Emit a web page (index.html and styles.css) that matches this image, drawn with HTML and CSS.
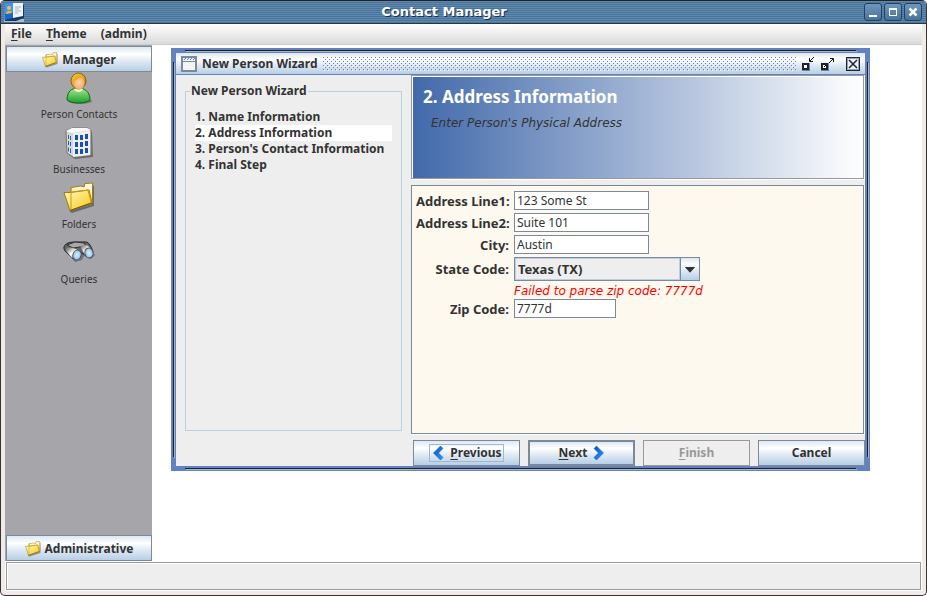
FILE: index.html
```html
<!DOCTYPE html>
<html lang="en">
<head>
<meta charset="utf-8">
<title>Contact Manager</title>
<link rel="stylesheet" href="styles.css">
</head>
<body>
<svg class="defs" width="0" height="0" aria-hidden="true">
  <defs>
    <linearGradient id="gold" x1="0" y1="0" x2="1" y2="1"><stop offset="0" stop-color="#fff9c4"/><stop offset="1" stop-color="#f8ca10"/></linearGradient>
    <linearGradient id="pale" x1="0" y1="0" x2="0" y2="1"><stop offset="0" stop-color="#fffde8"/><stop offset="1" stop-color="#f7d95c"/></linearGradient>
    <linearGradient id="green" x1="0" y1="0" x2="0" y2="1"><stop offset="0" stop-color="#a5eb8f"/><stop offset="1" stop-color="#1b9f2a"/></linearGradient>
    <radialGradient id="skin"><stop offset="0" stop-color="#ffdcb8"/><stop offset="1" stop-color="#f6a765"/></radialGradient>
    <linearGradient id="hair" x1="0" y1="0" x2="1" y2="1"><stop offset="0" stop-color="#ffd34a"/><stop offset="1" stop-color="#a97000"/></linearGradient>
    <radialGradient id="lens"><stop offset="0" stop-color="#d9efff"/><stop offset="1" stop-color="#8ec2f5"/></radialGradient>
    <linearGradient id="tube" x1="0" y1="0" x2="1" y2="1"><stop offset="0" stop-color="#555"/><stop offset=".5" stop-color="#fff"/><stop offset="1" stop-color="#777"/></linearGradient>
    <linearGradient id="arrow" x1="0" y1="0" x2="1" y2="1"><stop offset="0" stop-color="#0a4fc4"/><stop offset="1" stop-color="#2f9cff"/></linearGradient>
    <symbol id="folder" viewBox="0 0 32 32">
      <path d="M6 29 9 31 31 24V4L29 3V22Z" fill="#000" opacity=".35"/>
      <path d="M8 5.500 18 4 21 5 22 1.500 29.500 1V21L7 28Z" fill="url(#pale)" stroke="#a77b06"/>
      <path d="M1 10.500H7L26 8 29 20.500 7 28.500Z" fill="url(#gold)" stroke="#a77b06"/>
      <path d="M8 5V27M9 10 25 8 28 20" fill="none" stroke="#c99a10"/>
      <path d="M7 28.500 29 21" stroke="#7e5a00"/>
    </symbol>
  </defs>
</svg>

<div class="window">
  <header class="titlebar">
    <svg class="app-icon" width="20" height="20" viewBox="0 0 20 20" aria-hidden="true">
      <path d="M14 17H20V20H0V18Z" fill="#b5bcc2"/>
      <path d="M1 3H20V16L12 19H1Z" fill="#17395f"/>
      <path d="M1 2 9 1V15L0 17Z" fill="#3f96ee"/>
      <path d="M9 1H19V14L9 16Z" fill="#eef3f8"/>
      <path d="M1 12 9 10V16L1 18Z" fill="#1767cf"/>
      <circle cx="5" cy="6" r="2" fill="#f2bd62"/><path d="M2 12C2 8 8 8 8 11Z" fill="#f4ba20"/>
      <path d="M11 5H17M11 7H15M11 9H17M11 11H14" stroke="#a9b7c5"/>
    </svg>
    <h1>Contact Manager</h1>
    <div class="window-controls">
      <button type="button" aria-label="Minimize"><svg width="16" height="16" viewBox="0 0 16 16"><path d="M4 12H12" stroke="#fff" stroke-width="2"/></svg></button>
      <button type="button" aria-label="Maximize"><svg width="16" height="16" viewBox="0 0 16 16"><path d="M4.500 4V12M11.500 4V12M4 11.500H12" stroke="#fff" fill="none"/><path d="M4 5H12" stroke="#fff" stroke-width="2"/></svg></button>
      <button type="button" aria-label="Close"><svg width="16" height="16" viewBox="0 0 16 16"><path d="M4.500 4.500 11.500 11.500M11.500 4.500 4.500 11.500" stroke="#fff" stroke-width="2.500"/></svg></button>
    </div>
  </header>

  <div class="client">
    <nav class="menubar">
      <button type="button"><u>F</u>ile</button>
      <button type="button"><u>T</u>heme</button>
      <button type="button">(admin)</button>
    </nav>

    <div class="workspace">
      <aside class="outlook">
        <button type="button" class="section metal"><svg width="16" height="16"><use href="#folder"/></svg>Manager</button>
        <div class="shortcuts">
          <button type="button">
            <svg width="32" height="34" viewBox="0 0 32 34" aria-hidden="true">
              <ellipse cx="17" cy="29" rx="12" ry="3" fill="#000" opacity=".3"/>
              <path d="M4 28C4 19 9 16 15 16S27 19 27 28C22 32 9 32 4 28Z" fill="url(#green)" stroke="#0c6a1c"/>
              <path d="M11 17C13 21 18 21 20 17L17 15H13Z" fill="#e8f8e0"/>
              <ellipse cx="15.500" cy="9" rx="7.500" ry="8" fill="url(#hair)" stroke="#946200"/>
              <ellipse cx="16" cy="11" rx="5.500" ry="6.500" fill="url(#skin)"/>
              <path d="M9 8C12 7 14 3 16 4 19 3 21 5 22 8 20 6 18 6 16 6 14 8 12 8 9 10Z" fill="#ecae14"/>
            </svg>
            Person Contacts
          </button>
          <button type="button">
            <svg width="32" height="34" viewBox="0 0 32 34" aria-hidden="true">
              <path d="M6 28 12 32 30 30 29 5 26 4V28Z" fill="#000" opacity=".35"/>
              <path d="M3 4 9 1H24L28 3V28L10 30 4 26Z" fill="#d7d7d7" stroke="#777"/>
              <path d="M3 4 9 1H24L28 3 9 6Z" fill="#fafafa"/>
              <path d="M10 6 27 4V28L10 30Z" fill="#efefef"/>
              <path d="M5 8 6 8V12L5 12ZM7 9 8 9V13L7 13ZM5 14 6 14V18L5 18ZM7 15 8 15V19L7 19ZM5 20 6 21V25L5 24ZM7 21 8 22V26L7 26Z" fill="#2f5fae"/>
              <path d="M12 8H15V13H12ZM17 8H20V13H17ZM22 7H25V12H22ZM12 15H15V20H12ZM17 15H20V20H17ZM22 14H25V19H22ZM12 22H15V27H12ZM17 22H20V27H17ZM22 21H25V26H22Z" fill="#164fae"/>
            </svg>
            Businesses
          </button>
          <button type="button">
            <svg width="32" height="34" viewBox="0 0 32 34" aria-hidden="true"><use href="#folder" width="32" height="32"/></svg>
            Folders
          </button>
          <button type="button">
            <svg width="32" height="34" viewBox="0 0 32 34" aria-hidden="true">
              <path d="M3 14 12 25 19 23 21 19 28 22 32 18 26 10Z" fill="#000" opacity=".3"/>
              <path d="M1 10C2 6 7 5 12 5L23 5C26 5 29 11 30 15L24 19 15 14 14 21 9 21C6 17 0 14 1 10Z" fill="#666" stroke="#222"/>
              <path d="M4 8 12 5 21 6 23 9 10 11Z" fill="#a8a8a8" stroke="#333"/>
              <path d="M3 10 10 11 17 14 9 21C6 17 2 14 3 10Z" fill="url(#tube)"/>
              <path d="M17 9 24 8 30 14 22 18Z" fill="url(#tube)"/>
              <ellipse cx="14" cy="18" rx="4" ry="5" transform="rotate(20 14 18)" fill="url(#lens)" stroke="#555"/>
              <ellipse cx="26" cy="16" rx="4" ry="5" transform="rotate(-15 26 16)" fill="url(#lens)" stroke="#555"/>
            </svg>
            Queries
          </button>
        </div>
        <button type="button" class="section metal"><svg width="16" height="16"><use href="#folder"/></svg>Administrative</button>
      </aside>

      <main class="desktop">
        <section class="frame" aria-label="New Person Wizard">
          <div class="frame-title metal">
            <svg width="16" height="16" viewBox="0 0 16 16" aria-hidden="true">
              <rect x="1" y="1" width="14" height="14" fill="#f4f4f4" stroke="#7a8a99" stroke-width="2"/>
              <path d="M2 2.500H14" stroke="#dce7f4"/><path d="M3 3.500H14M4 2.500H14" stroke="#6382bf" stroke-dasharray="1 2"/><path d="M2 5.500H14" stroke="#7a8a99"/>
            </svg>
            <h2>New Person Wizard</h2>
            <span class="bumps"></span>
            <button type="button" aria-label="Iconify"><svg width="14" height="16" viewBox="0 0 14 16"><rect x="2" y="8" width="5" height="5" fill="#fff" stroke="#222" stroke-width="2"/><path d="M1 14.500H8.500M8.500 7V15" stroke="#6382bf"/><path d="M13 1 9 5M8.500 2V5.500H12" fill="none" stroke="#111"/></svg></button>
            <button type="button" aria-label="Maximize"><svg width="14" height="16" viewBox="0 0 14 16"><rect x="1" y="8" width="5" height="5" fill="#fff" stroke="#222" stroke-width="2"/><path d="M0 14.500H7.500M7.500 7V15" stroke="#6382bf"/><path d="M3 11 5 9M8 7 12 3M9 2.500H12.500V6" fill="none" stroke="#111"/></svg></button>
            <button type="button" aria-label="Close"><svg width="16" height="16" viewBox="0 0 16 16"><rect x="1.500" y="1.500" width="13" height="13" fill="#e8f0f8" stroke="#222"/><rect x="2.500" y="2.500" width="11" height="11" fill="none" stroke="#8fa5d0"/><path d="M4 4 12 12M12 4 4 12" stroke="#222" stroke-width="1.500"/></svg></button>
          </div>
          <div class="wizard">
            <fieldset class="steps">
              <legend>New Person Wizard</legend>
              <ol>
                <li>1. Name Information</li>
                <li class="current" aria-current="step">2. Address Information</li>
                <li>3. Person's Contact Information</li>
                <li>4. Final Step</li>
              </ol>
            </fieldset>
            <div class="page">
              <div class="banner">
                <h3>2. Address Information</h3>
                <p>Enter Person's Physical Address</p>
              </div>
              <form class="fields" id="address">
                <label for="line1">Address Line1:</label>
                <input id="line1" type="text" value="123 Some St">
                <label for="line2">Address Line2:</label>
                <input id="line2" type="text" value="Suite 101">
                <label for="city">City:</label>
                <input id="city" type="text" value="Austin">
                <label for="state">State Code:</label>
                <div class="combo metal">
                  <select id="state"><option>Texas (TX)</option></select>
                  <svg width="19" height="22" viewBox="0 0 19 22" aria-hidden="true"><path d="M4 9H15L9.500 15Z" fill="#333"/></svg>
                </div>
                <p class="error" id="zip-error">Failed to parse zip code: 7777d</p>
                <label for="zip">Zip Code:</label>
                <input id="zip" class="short" type="text" value="7777d" aria-describedby="zip-error">
              </form>
              <div class="actions">
                <button type="button" class="metal"><span class="focus"><svg width="11" height="14" viewBox="0 0 11 14" aria-hidden="true"><path d="M7.500 0 10 2.500 5.500 7 10 11.500 7.500 14 0.500 7Z" fill="url(#arrow)" stroke="#0b48b8" stroke-width=".5"/></svg><span><u>P</u>revious</span></span></button>
                <button type="button" class="metal default"><span><u>N</u>ext</span><svg width="11" height="14" viewBox="0 0 11 14" aria-hidden="true"><path d="M3.500 0 1 2.500 5.500 7 1 11.500 3.500 14 10.500 7Z" fill="url(#arrow)" stroke="#0b48b8" stroke-width=".5"/></svg></button>
                <button type="button" disabled><span><u>F</u>inish</span></button>
                <button type="button" class="metal">Cancel</button>
              </div>
            </div>
          </div>
        </section>
      </main>
    </div>
    <footer class="status"></footer>
  </div>
</div>
</body>
</html>
```
FILE: styles.css
```css
* { box-sizing: border-box; }

:root {
  --blue: #6382bf;
  --edge: #7a8a99;
  --sky: #b8cfe5;
  --panel: #eee;
  --ink: #333;
  --plain: "DejaVu Sans", "Noto Sans", sans-serif;
}

body {
  margin: 0;
  background: #fff;
  color: var(--ink);
  font: bold 12px/16px "Noto Sans", "Open Sans", sans-serif;
}

h1, h2, h3, p, ol { margin: 0; padding: 0; font-size: inherit; }
button { margin: 0; padding: 0; border: 0; background: none; color: inherit; font: inherit; }
svg { display: block; flex: none; }
.defs { position: absolute; }
u { text-underline-offset: 2px; }

.metal { background: linear-gradient(#dde8f3, #fff 30%, #dde8f3 60%, var(--sky)); }

.window {
  display: flex;
  flex-direction: column;
  min-height: 100vh;
  border: 1px solid #3a3234;
  border-top: 0;
  border-radius: 5px;
  background: #efebe7;
  overflow: hidden;
}

.titlebar {
  display: flex;
  align-items: center;
  height: 24px;
  padding: 0 4px 0 3px;
  border-top: 1px solid #222;
  border-bottom: 1px solid #24384c;
  background: repeating-linear-gradient(#5d88b0 0 1px, #4c7398 1px 2px);
}
.titlebar h1 {
  flex: 1;
  color: #fff;
  font-family: var(--plain);
  font-size: 13px;
  text-align: center;
  text-shadow: 1px 1px #1c2f42;
}
.window-controls { display: flex; gap: 2px; }
.window-controls button {
  border: 1px solid #23415f;
  border-radius: 3px;
  background: linear-gradient(#6c98c0, #4a7298);
}

.client {
  flex: 1;
  display: flex;
  flex-direction: column;
  margin: 0 4px 4px;
  background: #fff;
}

.menubar {
  display: flex;
  gap: 14px;
  height: 21px;
  padding: 0 6px;
  border-bottom: 1px solid #ccc;
  background: linear-gradient(#fff, #dadada);
}

.workspace { flex: 1; display: flex; }

.outlook {
  display: flex;
  flex-direction: column;
  width: 147px;
  margin-bottom: 1px;
  padding: 1px 0 0 1px;
  background: #a6a5aa;
}
.section {
  display: flex;
  align-items: center;
  justify-content: center;
  gap: 4px;
  height: 26px;
  padding-top: 2px;
  border: 1px solid var(--edge);
}
.shortcuts { flex: 1; display: flex; flex-direction: column; }
.shortcuts button {
  display: flex;
  flex-direction: column;
  align-items: center;
  height: 55px;
  font-size: 10px;
  font-weight: normal;
}

.desktop { flex: 1; position: relative; }

.frame {
  position: absolute;
  inset: 3px 52px 91px 19px;
  display: flex;
  flex-direction: column;
  padding: 5px;
  background:
    linear-gradient(#222, #222) 14px 2px / calc(100% - 28px) 1px no-repeat,
    linear-gradient(#a3b8cc, #a3b8cc) 15px 3px / calc(100% - 28px) 1px no-repeat,
    linear-gradient(#222, #222) 14px calc(100% - 2px) / calc(100% - 28px) 1px no-repeat,
    linear-gradient(#a3b8cc, #a3b8cc) 15px calc(100% - 1px) / calc(100% - 28px) 1px no-repeat,
    linear-gradient(#222, #222) 2px 14px / 1px calc(100% - 28px) no-repeat,
    linear-gradient(#a3b8cc, #a3b8cc) 3px 15px / 1px calc(100% - 28px) no-repeat,
    linear-gradient(#222, #222) calc(100% - 2px) 14px / 1px calc(100% - 28px) no-repeat,
    linear-gradient(#a3b8cc, #a3b8cc) calc(100% - 1px) 15px / 1px calc(100% - 28px) no-repeat,
    var(--blue);
}
.frame-title {
  display: flex;
  align-items: center;
  gap: 5px;
  height: 22px;
  padding: 0 4px 0 5px;
  border-bottom: 1px solid var(--blue);
}
.frame-title button + button { margin-left: 1px; }
.frame-title button:last-child { margin-left: 5px; }
.bumps {
  flex: 1;
  height: 14px;
  background:
    conic-gradient(from 270deg at 1px 1px, var(--blue) 90deg, transparent 0) 0 0 / 4px 4px,
    conic-gradient(from 270deg at 1px 1px, var(--blue) 90deg, transparent 0) 2px 2px / 4px 4px,
    conic-gradient(from 270deg at 1px 1px, #fff 90deg, transparent 0) 1px 1px / 4px 4px;
}

.wizard { flex: 1; display: flex; gap: 9px; background: var(--panel); }

.steps {
  flex: none;
  min-width: 217px;
  margin: 8px 0 35px 9px;
  padding: 10px 9px;
  border: 1px solid var(--sky);
}
.steps legend { margin-left: -5px; padding: 0 1px; }
.steps ol { list-style: none; }
.current { background: #fff; }

.page { flex: 1; display: flex; flex-direction: column; }
.banner {
  height: 104px;
  margin-right: 1px;
  padding: 9px 11px;
  border: 1px solid #999;
  box-shadow: inset 1px 1px #fff, 1px 1px #fff;
  background: linear-gradient(90deg, #4169aa, #fff);
}
.banner h3 { color: #fff; font-size: 17px; line-height: 24px; }
.banner p {
  padding: 6px 8px;
  font-family: var(--plain);
  font-weight: normal;
  font-style: italic;
}

.fields {
  flex: 1;
  display: grid;
  grid-template-columns: 93px 1fr;
  align-content: start;
  align-items: center;
  gap: 3px 5px;
  margin: 6px 1px 6px 0;
  padding: 5px 4px;
  border: 1px solid var(--edge);
  box-shadow: 1px 1px #fff;
  background: #fef9ee;
  font-size: 13px;
}
.fields label { text-align: right; white-space: nowrap; }
.fields input {
  width: 135px;
  height: 19px;
  padding: 0 2px;
  border: 1px solid var(--edge);
  background: #fff;
  color: var(--ink);
  font: 12px/16px "Noto Sans", "Open Sans", sans-serif;
}
.fields .short { width: 102px; }
.combo {
  display: flex;
  width: 186px;
  height: 24px;
  border: 1px solid var(--edge);
}
.combo select {
  flex: 1;
  appearance: none;
  padding: 0 2px;
  border: 1px solid var(--sky);
  border-radius: 0;
  outline: 0;
  background: var(--panel);
  color: inherit;
  font: inherit;
}
.combo svg { border-left: 1px solid var(--edge); }
.error {
  grid-column: 2;
  margin-bottom: -3px;
  color: #f00;
  font: italic 12px/15px var(--plain);
}

.actions {
  display: grid;
  grid-template-columns: repeat(4, 1fr);
  gap: 8px;
  padding-left: 2px;
}
.actions button {
  display: flex;
  align-items: center;
  justify-content: center;
  gap: 6px;
  height: 26px;
  border: 1px solid var(--edge);
}
.actions .default { border-width: 2px; }
.actions button:disabled { border-color: #999; color: #999; }
.focus {
  display: flex;
  align-items: center;
  gap: 6px;
  padding: 0 1px 0 3px;
  border: 1px solid #a3b8cc;
}

.status {
  height: 28px;
  margin: 0 1px 1px;
  border: 1px solid #999;
  box-shadow: inset 1px 1px #fff, 1px 1px #fff;
  background: var(--panel);
}
```
